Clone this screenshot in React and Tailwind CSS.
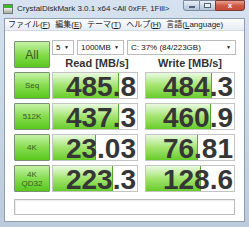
import React from 'react';

const rows = [
    { label: 'Seq', read: '485.8', readFill: 66, write: '484.3', writeFill: 66 },
    { label: '512K', read: '437.3', readFill: 66, write: '460.9', writeFill: 65 },
    { label: '4K', read: '23.03', readFill: 43, write: '76.81', writeFill: 52 },
    { label: '4K\nQD32', read: '223.3', readFill: 60, write: '128.6', writeFill: 55 },
];

const menus = [
    ['ファイル(', 'F', ')'],
    ['編集(', 'E', ')'],
    ['テーマ(', 'T', ')'],
    ['ヘルプ(', 'H', ')'],
    ['言語(', 'L', 'anguage)'],
];

const Gauge = ({ value, fill, width }) => (
    <div
        className="relative h-full border border-[#c4c4c4] bg-white"
        style={{ width }}
    >
        <div
            className="absolute left-0 top-0 bottom-0 bg-gradient-to-b from-[#eafae0] via-[#a3e46e] to-[#66cd26] border-r border-[#58a82a]"
            style={{ width: fill }}
        />
        <div className="relative h-full flex justify-end pr-[1px] pt-[1px] text-[28px] leading-[25px] font-bold text-[#363636]">
            {value}
        </div>
    </div>
);

const GreenButton = ({ children, big }) => (
    <div
        className={`w-[36px] h-full flex items-center justify-center text-center border border-[#7d8f78] rounded-[1px] bg-gradient-to-b from-[#c4f2a4] via-[#86dc4c] to-[#58c81a] text-[#3b5a28] ${big ? 'text-[12px]' : 'text-[8px] leading-[9px]'} whitespace-pre-line`}
    >
        {children}
    </div>
);

const Combo = ({ text, width }) => (
    <div
        className="h-[15px] flex items-center justify-between border border-[#bcbcbc] bg-white pl-[3px] pr-[4px] text-[8px] text-[#111]"
        style={{ width }}
    >
        <span>{text}</span>
        <span className="text-[5px]">▼</span>
    </div>
);

export default function App() {
    return (
        <div className="w-[249px] h-[227px] flex flex-col overflow-hidden bg-gradient-to-b from-[#d6e2ef] to-[#bccbdc] font-['Liberation_Sans','Noto_Sans_CJK_JP',sans-serif]">
            {/* title bar */}
            <div className="h-[18px] flex items-start">
                <div className="mt-[4px] ml-[3px] w-[10px] h-[10px] flex flex-col border border-[#6d7a6d] bg-[#dfe3df]">
                    <div className="h-[3px] bg-[#3fb52a]" />
                    <div className="flex-1 bg-gradient-to-b from-[#f0f0f0] to-[#a8aca8]" />
                </div>
                <div className="ml-[4px] mt-[4px] text-[8px] leading-[10px] text-[#1e2633] whitespace-nowrap">
                    CrystalDiskMark 3.0.1 x64 &lt;All 0xFF, 1Fill&gt;
                </div>
                <div className="ml-auto mr-[4px] flex h-[11px]">
                    <div className="w-[17px] flex items-center justify-center border border-[#7b8ba0] rounded-bl-[3px] bg-gradient-to-b from-[#e8eef6] to-[#b3c3d6]">
                        <div className="w-[6px] h-[2px] bg-white border border-[#536377] mt-[3px]" />
                    </div>
                    <div className="w-[15px] flex items-center justify-center border-y border-[#7b8ba0] bg-gradient-to-b from-[#e8eef6] to-[#b3c3d6]">
                        <div className="w-[7px] h-[5px] border border-[#536377] bg-white/60" />
                    </div>
                    <div className="w-[30px] flex items-center justify-center border border-[#7e3a34] rounded-br-[3px] bg-gradient-to-b from-[#e8a193] via-[#cf5a47] to-[#c44a36] text-white text-[8px] font-bold leading-none">
                        x
                    </div>
                </div>
            </div>

            {/* client */}
            <div className="flex-1 mx-[4px] mb-[5px] flex flex-col bg-white border border-[#8e9fb3]">
                <div className="h-[12px] flex items-center gap-[5px] pl-[3px] bg-gradient-to-b from-[#fbfcfe] to-[#e7edf5] border-b border-[#d4dbe5] text-[8px] leading-none text-[#1a1a1a] whitespace-nowrap">
                    {menus.map(([a, u, b]) => (
                        <span key={u}>
                            {a}
                            <span className="underline">{u}</span>
                            {b}
                        </span>
                    ))}
                </div>

                <div className="flex-1 flex flex-col pl-[9px] pt-[9px]">
                    <div className="flex gap-[2px] h-[30px]">
                        <div className="h-[27px] mt-[1px]">
                            <GreenButton big>All</GreenButton>
                        </div>
                        <div className="flex flex-col">
                            <div className="flex gap-[3px]">
                                <Combo text="5" width={22} />
                                <Combo text="1000MB" width={47} />
                                <Combo text="C: 37% (84/223GB)" width={109} />
                            </div>
                            <div className="flex gap-[7px] h-[15px] items-center pt-[1px] text-[11px] font-bold text-[#333]">
                                <div className="w-[86px] text-center pl-[4px]">Read [MB/s]</div>
                                <div className="w-[90px] text-center">Write [MB/s]</div>
                            </div>
                        </div>
                    </div>

                    <div className="mt-[2px] flex flex-col gap-[4px]">
                        {rows.map((r) => (
                            <div key={r.label} className="flex h-[27px]">
                                <GreenButton>{r.label}</GreenButton>
                                <div className="ml-[2px]">
                                    <Gauge value={r.read} fill={r.readFill} width={86} />
                                </div>
                                <div className="ml-[7px]">
                                    <Gauge value={r.write} fill={r.writeFill} width={90} />
                                </div>
                            </div>
                        ))}
                    </div>

                    <div className="mt-[7px] w-[221px] h-[16px] border border-[#bcbcbc] bg-white shadow-[inset_1px_1px_1px_rgba(0,0,0,0.08)]" />
                </div>
            </div>
        </div>
    );
}
